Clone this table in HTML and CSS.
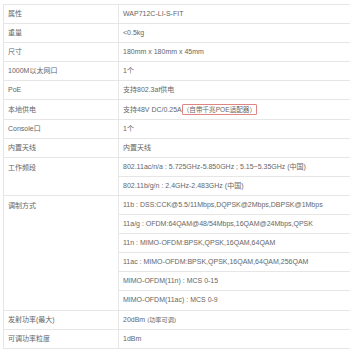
FILE: index.html
```html
<!DOCTYPE html>
<html lang="zh-CN">
<head>
<meta charset="utf-8">
<title>WAP712C-LI-S-FIT 参数</title>
<link rel="stylesheet" href="styles.css">
</head>
<body>
<div class="wrap">
<table class="spec">
  <tbody>
    <tr><td class="k">属性</td><td class="v">WAP712C-LI-S-FIT</td></tr>
    <tr><td class="k">重量</td><td class="v">&lt;0.5kg</td></tr>
    <tr><td class="k">尺寸</td><td class="v">180mm x 180mm x 45mm</td></tr>
    <tr><td class="k">1000M以太网口</td><td class="v">1个</td></tr>
    <tr><td class="k">PoE</td><td class="v">支持802.3af供电</td></tr>
    <tr><td class="k">本地供电</td><td class="v">支持48V DC/0.25A<span class="note">（自带千兆POE适配器）</span></td></tr>
    <tr><td class="k">Console口</td><td class="v">1个</td></tr>
    <tr><td class="k">内置天线</td><td class="v">内置天线</td></tr>
    <tr><td class="k top" rowspan="2">工作频段</td><td class="v">802.11ac/n/a : 5.725GHz-5.850GHz ; 5.15~5.35GHz (中国)</td></tr>
    <tr><td class="v">802.11b/g/n : 2.4GHz-2.483GHz (中国)</td></tr>
    <tr><td class="k top" rowspan="6">调制方式</td><td class="v">11b : DSS:CCK@5.5/11Mbps,DQPSK@2Mbps,DBPSK@1Mbps</td></tr>
    <tr><td class="v">11a/g : OFDM:64QAM@48/54Mbps,16QAM@24Mbps,QPSK</td></tr>
    <tr><td class="v">11n : MIMO-OFDM:BPSK,QPSK,16QAM,64QAM</td></tr>
    <tr><td class="v">11ac : MIMO-OFDM:BPSK,QPSK,16QAM,64QAM,256QAM</td></tr>
    <tr><td class="v">MIMO-OFDM(11n) : MCS 0-15</td></tr>
    <tr><td class="v">MIMO-OFDM(11ac) : MCS 0-9</td></tr>
    <tr><td class="k">发射功率(最大)</td><td class="v">20dBm <span class="small">(功率可调)</span></td></tr>
    <tr><td class="k">可调功率粒度</td><td class="v">1dBm</td></tr>
  </tbody>
</table>
</div>
</body>
</html>
```
FILE: styles.css
```css
html, body {
  margin: 0;
  padding: 0;
  background: #ffffff;
  overflow: hidden;
  width: 350px;
  height: 350px;
}
.wrap {
  padding: 4px 0 0 3px;
}
.spec {
  border-collapse: collapse;
  width: 349px;
  table-layout: fixed;
  font-family: "Liberation Sans", "Noto Sans CJK SC", sans-serif;
  font-size: 7px;
  color: #666666;
}
.spec tr {
  height: 19.1px;
}
.spec td {
  border: 1px solid #e6e6e6;
  padding: 0 0 0 4px;
  vertical-align: middle;
  white-space: nowrap;
  line-height: 10px;
}
.spec td.k {
  width: 110px;
}
.spec td.top {
  vertical-align: top;
  padding-top: 5px;
}
.note {
  border: 1px solid #e08585;
  border-radius: 1px;
  padding: 1px 0;
  font-size: 6.6px;
}
.small {
  font-size: 6.2px;
}
```
